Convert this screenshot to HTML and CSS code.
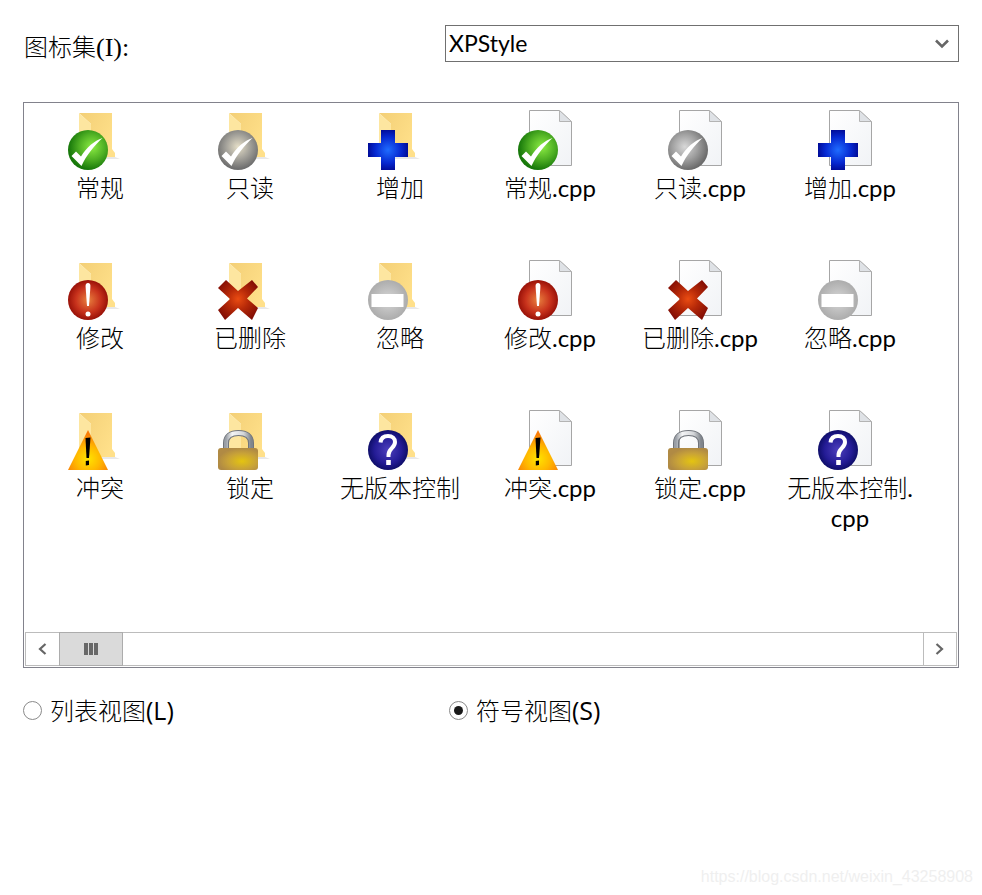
FILE: index.html
```html
<!DOCTYPE html>
<html lang="zh-CN">
<head>
<meta charset="utf-8">
<title>图标集</title>
<link rel="stylesheet" href="styles.css">
</head>
<body>
<svg class="defs" aria-hidden="true">
  <defs>
    <linearGradient id="gFolder" x1="0" y1="0" x2="1" y2="0.6">
      <stop offset="0" stop-color="#f3cf76"/><stop offset="1" stop-color="#ffe08a"/>
    </linearGradient>
    <linearGradient id="gDoc" x1="0" y1="0" x2="1" y2="1">
      <stop offset="0" stop-color="#ffffff"/><stop offset="1" stop-color="#f1f3f6"/>
    </linearGradient>
    <radialGradient id="gGreen" cx="0.6" cy="0.42" r="0.58">
      <stop offset="0" stop-color="#8cec44"/><stop offset="0.55" stop-color="#4fb024"/><stop offset="1" stop-color="#17780a"/>
    </radialGradient>
    <radialGradient id="gGray" cx="0.5" cy="0.42" r="0.55">
      <stop offset="0" stop-color="#e6dfc8"/><stop offset="0.55" stop-color="#a3a19a"/><stop offset="1" stop-color="#6f6f6f"/>
    </radialGradient>
    <radialGradient id="gGray2" cx="0.42" cy="0.42" r="0.58">
      <stop offset="0" stop-color="#d8d8d8"/><stop offset="0.55" stop-color="#a0a0a0"/><stop offset="1" stop-color="#6c6c6c"/>
    </radialGradient>
    <radialGradient id="gBlue" cx="0.5" cy="0.5" r="0.55">
      <stop offset="0" stop-color="#1f6cff"/><stop offset="0.6" stop-color="#0628d0"/><stop offset="1" stop-color="#00068c"/>
    </radialGradient>
    <radialGradient id="gRed" cx="0.5" cy="0.5" r="0.52">
      <stop offset="0" stop-color="#e8803e"/><stop offset="0.6" stop-color="#c8321c"/><stop offset="1" stop-color="#940e06"/>
    </radialGradient>
    <radialGradient id="gCross" gradientUnits="userSpaceOnUse" cx="20" cy="39" r="25">
      <stop offset="0" stop-color="#ea4c12"/><stop offset="0.45" stop-color="#b42808"/><stop offset="1" stop-color="#7c0a04"/>
    </radialGradient>
    <radialGradient id="gWarn" cx="0.5" cy="0.72" r="0.62">
      <stop offset="0" stop-color="#ffe400"/><stop offset="0.5" stop-color="#ffb800"/><stop offset="1" stop-color="#f97c08"/>
    </radialGradient>
    <linearGradient id="gSilver" x1="0" y1="0" x2="1" y2="0">
      <stop offset="0" stop-color="#9a9fa6"/><stop offset="0.25" stop-color="#f4f5f6"/><stop offset="0.7" stop-color="#d4d6d9"/><stop offset="1" stop-color="#80858c"/>
    </linearGradient>
    <radialGradient id="gGold" cx="0.6" cy="0.6" r="0.6">
      <stop offset="0" stop-color="#e4c410"/><stop offset="0.6" stop-color="#c8a238"/><stop offset="1" stop-color="#b08a44"/>
    </radialGradient>
    <radialGradient id="gNavy" cx="0.5" cy="0.5" r="0.52">
      <stop offset="0" stop-color="#4d3fbc"/><stop offset="0.65" stop-color="#241c96"/><stop offset="1" stop-color="#0c0c64"/>
    </radialGradient>
    <radialGradient id="gIgnore" cx="0.5" cy="0.5" r="0.55">
      <stop offset="0" stop-color="#d6d6d6"/><stop offset="1" stop-color="#a8a8a8"/>
    </radialGradient>

    <symbol id="folder" viewBox="0 0 64 60">
      <path d="M11 3H44V39L47 43V49H23V14Z" fill="url(#gFolder)"/>
      <path d="M11 3L23 14V49L11 40Z" fill="#fde6a0"/>
      <path d="M23 49H52L47 47H23Z" fill="#e8e8e8"/>
    </symbol>
    <symbol id="doc" viewBox="0 0 64 60">
      <path d="M11.5 .5H41.500L53.500 11.500V55.500H11.500Z" fill="url(#gDoc)" stroke="#a6a6a6"/>
      <path d="M41.500 .5V11.500H53.500Z" fill="#dfe2e6" stroke="#b4b4b4"/>
    </symbol>
    <symbol id="tick" viewBox="0 0 40 40">
      <path d="M3.500 26L8 21.500L13 26.500C19 17 26 11 34.500 8C26 16 18.500 25 13.500 36Z" fill="#fff"/>
    </symbol>
    <symbol id="ok" viewBox="0 0 64 60">
      <circle cx="20" cy="40" r="20" fill="url(#gGreen)"/>
      <use href="#tick" x="0" y="20" width="40" height="40"/>
    </symbol>
    <symbol id="readonly" viewBox="0 0 64 60">
      <circle cx="20" cy="40" r="20" fill="url(#gGray)"/>
      <use href="#tick" x="0" y="20" width="40" height="40"/>
    </symbol>
    <symbol id="readonly2" viewBox="0 0 64 60">
      <circle cx="20" cy="40" r="20" fill="url(#gGray2)"/>
      <use href="#tick" x="0" y="20" width="40" height="40"/>
    </symbol>
    <symbol id="plus" viewBox="0 0 64 60">
      <path d="M13 20H27V33H40V47H27V60H13V47H0V33H13Z" fill="url(#gBlue)"/>
    </symbol>
    <symbol id="modified" viewBox="0 0 64 60">
      <circle cx="20" cy="40" r="20" fill="url(#gRed)"/>
      <path d="M20 23C21.800 23 22.600 24 22.400 27L21 46H19L17.600 27C17.400 24 18.200 23 20 23Z" fill="#fff"/>
      <circle cx="20" cy="54" r="2.500" fill="#fff"/>
    </symbol>
    <symbol id="deleted" viewBox="0 0 64 60">
      <path d="M0 28L8 20L20 31L34 20L40 27L29 38.500L40 48L34 60L20 48L7 60L0 50L12 39Z" fill="url(#gCross)"/>
    </symbol>
    <symbol id="ignored" viewBox="0 0 64 60">
      <circle cx="20" cy="40" r="20" fill="url(#gIgnore)"/>
      <rect x="3.500" y="34" width="32" height="13" fill="#fff"/>
    </symbol>
    <symbol id="conflict" viewBox="0 0 64 60">
      <path d="M20 20L40 60H0Z" fill="url(#gWarn)"/>
      <path d="M17.500 28L22.500 27.500L21 48H18.500Z" fill="#000"/>
      <path d="M17.800 51L21 50.500L21 55L17.800 55.500Z" fill="#000"/>
    </symbol>
    <symbol id="locked" viewBox="0 0 64 60">
      <path d="M8 40V33C8 26 13 23 20.500 23C28 23 33 26 33 33V40" fill="none" stroke="#70747b" stroke-width="6"/>
      <path d="M8 40V33C8 26 13 23 20.500 23C28 23 33 26 33 33V40" fill="none" stroke="url(#gSilver)" stroke-width="4"/>
      <rect y="38" width="40" height="22" rx="3" fill="url(#gGold)"/>
    </symbol>
    <symbol id="unknown" viewBox="0 0 64 60">
      <circle cx="20" cy="40" r="20" fill="url(#gNavy)"/>
      <path d="M12.500 32.500C13 28 16 26 20 26C24.500 26 27 28.500 27 32C27 38 20.500 38.500 20.500 45V47" fill="none" stroke="#fff" stroke-width="4"/>
      <rect x="18.200" y="50" width="4.600" height="5" fill="#fff"/>
    </symbol>
  </defs>
</svg>

<main class="page">
  <header class="top-row">
    <label class="set-label">图标集<span class="serif">(I):</span></label>
    <div class="select">
      <span class="lat">XPStyle</span>
      <svg class="select-arrow" width="14" height="10" viewBox="0 0 14 10"><path d="M1 1.500L7 7.500L13 1.500" fill="none" stroke="#666" stroke-width="2.600"/></svg>
    </div>
  </header>

  <section class="listbox">
    <div class="icon-grid">
      <div class="item"><svg class="icon"><use href="#folder"/><use href="#ok"/></svg><span>常规</span></div>
      <div class="item"><svg class="icon"><use href="#folder"/><use href="#readonly"/></svg><span>只读</span></div>
      <div class="item"><svg class="icon"><use href="#folder"/><use href="#plus"/></svg><span>增加</span></div>
      <div class="item"><svg class="icon"><use href="#doc"/><use href="#ok"/></svg><span>常规<b class="lat">.cpp</b></span></div>
      <div class="item"><svg class="icon"><use href="#doc"/><use href="#readonly2"/></svg><span>只读<b class="lat">.cpp</b></span></div>
      <div class="item"><svg class="icon"><use href="#doc"/><use href="#plus"/></svg><span>增加<b class="lat">.cpp</b></span></div>

      <div class="item"><svg class="icon"><use href="#folder"/><use href="#modified"/></svg><span>修改</span></div>
      <div class="item"><svg class="icon"><use href="#folder"/><use href="#deleted"/></svg><span>已删除</span></div>
      <div class="item"><svg class="icon"><use href="#folder"/><use href="#ignored"/></svg><span>忽略</span></div>
      <div class="item"><svg class="icon"><use href="#doc"/><use href="#modified"/></svg><span>修改<b class="lat">.cpp</b></span></div>
      <div class="item"><svg class="icon"><use href="#doc"/><use href="#deleted"/></svg><span>已删除<b class="lat">.cpp</b></span></div>
      <div class="item"><svg class="icon"><use href="#doc"/><use href="#ignored"/></svg><span>忽略<b class="lat">.cpp</b></span></div>

      <div class="item"><svg class="icon"><use href="#folder"/><use href="#conflict"/></svg><span>冲突</span></div>
      <div class="item"><svg class="icon"><use href="#folder"/><use href="#locked"/></svg><span>锁定</span></div>
      <div class="item"><svg class="icon"><use href="#folder"/><use href="#unknown"/></svg><span>无版本控制</span></div>
      <div class="item"><svg class="icon"><use href="#doc"/><use href="#conflict"/></svg><span>冲突<b class="lat">.cpp</b></span></div>
      <div class="item"><svg class="icon"><use href="#doc"/><use href="#locked"/></svg><span>锁定<b class="lat">.cpp</b></span></div>
      <div class="item"><svg class="icon"><use href="#doc"/><use href="#unknown"/></svg><span>无版本控制<b class="lat">.</b><br><b class="lat">cpp</b></span></div>
    </div>

    <div class="scrollbar">
      <div class="scroll-btn">
        <svg width="9" height="12" viewBox="0 0 9 12"><path d="M7.500 1L2 6L7.500 11" fill="none" stroke="#666" stroke-width="2.200"/></svg>
      </div>
      <div class="scroll-thumb"><i></i><i></i><i></i></div>
      <div class="scroll-track"></div>
      <div class="scroll-btn scroll-btn-end">
        <svg width="9" height="12" viewBox="0 0 9 12"><path d="M1.500 1L7 6L1.500 11" fill="none" stroke="#666" stroke-width="2.200"/></svg>
      </div>
    </div>
  </section>

  <div class="radio-row">
    <label class="radio"><span class="radio-dot"></span><span>列表视图<b class="key">(L)</b></span></label>
    <label class="radio"><span class="radio-dot radio-on"></span><span>符号视图<b class="key">(S)</b></span></label>
  </div>
</main>

<div class="watermark">https://blog.csdn.net/weixin_43258908</div>
</body>
</html>
```

FILE: styles.css
```css
* {
  box-sizing: border-box;
}

html,
body {
  margin: 0;
  height: 100%;
  background: #fff;
}

body {
  position: relative;
  overflow: hidden;
  color: #000;
  font-family: Lato, "Noto Sans CJK SC", sans-serif;
  font-size: 24px;
  font-weight: 300;
}

.lat {
  font-family: Lato, sans-serif;
  font-weight: 400;
}

.key {
  font-family: "Open Sans", sans-serif;
  font-size: 25px;
  font-weight: 400;
}

.defs {
  position: absolute;
  width: 0;
  height: 0;
}

.page {
  width: 936px;
  margin-left: 23px;
  padding-top: 25px;
}

.top-row {
  display: flex;
  align-items: flex-start;
  justify-content: space-between;
  height: 37px;
}

.set-label {
  height: 37px;
  padding: 7px 0 0 1px;
  line-height: 30px;
}

.serif {
  font-family: "Liberation Serif", serif;
  font-size: 26px;
  font-weight: 400;
}

.select {
  display: flex;
  align-items: center;
  justify-content: space-between;
  width: 514px;
  height: 37px;
  padding: 0 9px 0 3px;
  border: 1px solid #707070;
  font-size: 23px;
  line-height: 35px;
}

.listbox {
  display: flex;
  flex-direction: column;
  height: 566px;
  margin-top: 40px;
  border: 1px solid #82828c;
}

.icon-grid {
  display: grid;
  flex: 1;
  grid-template-columns: repeat(6, 150px);
  grid-auto-rows: 150px;
  align-content: start;
  padding: 7px 0 0 1px;
  overflow: hidden;
}

.item {
  display: flex;
  flex-direction: column;
  align-items: center;
  text-align: center;
  line-height: 30px;
}

.icon {
  display: block;
  flex: none;
  width: 64px;
  height: 60px;
  margin-bottom: 3px;
}

.icon use {
  width: 64px;
  height: 60px;
}

.scrollbar {
  display: flex;
  flex: none;
  height: 34px;
  margin: 0 1px 1px;
  border: 1px solid #bcbcbc;
  background: #fff;
}

.scroll-btn {
  display: flex;
  flex: none;
  align-items: center;
  justify-content: center;
  width: 33px;
  padding-right: 1px;
}

.scroll-btn-end {
  padding: 0 2px 0 0;
  border-left: 1px solid #bcbcbc;
}

.scroll-thumb {
  display: flex;
  flex: none;
  gap: 1px;
  align-items: center;
  justify-content: center;
  width: 64px;
  margin: -1px 0;
  border: 1px solid #acacac;
  background: #dadada;
}

.scroll-thumb i {
  display: block;
  width: 4px;
  height: 12px;
  background: #686868;
}

.scroll-track {
  flex: 1;
}

.radio-row {
  display: grid;
  grid-template-columns: 426px 1fr;
  margin-top: 27px;
}

.radio {
  display: flex;
  align-items: center;
  gap: 8px;
  line-height: 30px;
}

.radio-dot {
  display: flex;
  align-items: center;
  justify-content: center;
  width: 19px;
  height: 19px;
  border: 1px solid #8a8a8a;
  border-radius: 50%;
}

.radio-on::after {
  content: "";
  width: 9px;
  height: 9px;
  border-radius: 50%;
  background: #1a1a1a;
}

.watermark {
  position: absolute;
  right: 9px;
  bottom: 8px;
  color: #efefef;
  font-family: "Liberation Sans", sans-serif;
  font-size: 16px;
  font-weight: 400;
  line-height: 20px;
}
```
